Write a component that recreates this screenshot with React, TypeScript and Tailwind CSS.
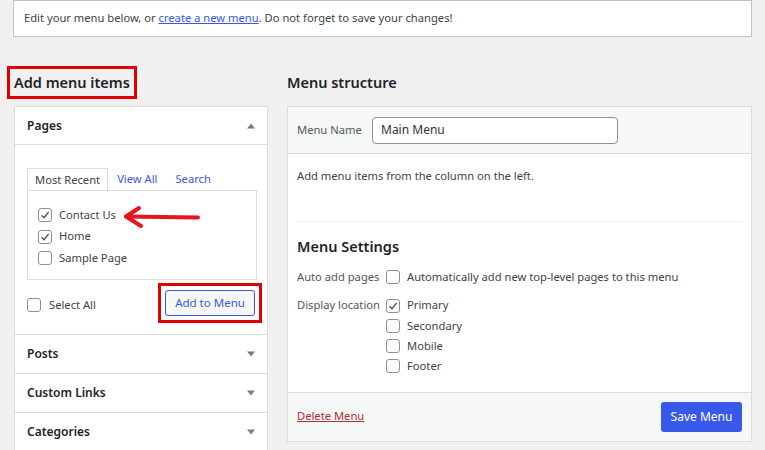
import React from "react";

const Check = ({ checked }: { checked?: boolean }) => (
  <span className="w-[14px] h-[14px] shrink-0 rounded-[3px] border border-[#8c8f94] bg-white flex items-center justify-center">
    {checked && (
      <svg width="10" height="10" viewBox="0 0 10 10">
        <path d="M1.5 5.2 L4 7.6 L8.6 2" fill="none" stroke="#50575e" strokeWidth="1.4" />
      </svg>
    )}
  </span>
);

const Caret = ({ up }: { up?: boolean }) => (
  <svg width="8" height="6" viewBox="0 0 8 6" className="shrink-0">
    {up ? <path d="M0 5.5 L4 0.5 L8 5.5 Z" fill="#787c82" /> : <path d="M0 0.5 L4 5.5 L8 0.5 Z" fill="#787c82" />}
  </svg>
);

const Accordion = ({ title }: { title: string }) => (
  <div className="h-[39px] border-t border-[#dcdcde] flex items-center justify-between pl-[12px] pr-[12px]">
    <span className="text-[12px] font-semibold text-[#1d2327]">{title}</span>
    <Caret />
  </div>
);

export default function App() {
  return (
    <div
      className="w-[765px] h-[450px] overflow-hidden bg-[#f0f0f1] text-[#3c434a] text-[11.2px]"
      style={{ fontFamily: '"Noto Sans", sans-serif' }}
    >
      {/* notice */}
      <div className="ml-[13px] w-[739px] h-[37px] bg-white border border-[#c3c4c7] flex items-center pl-[10px]">
        <span>
          Edit your menu below, or{" "}
          <a className="text-[#3858e9] underline">create a new menu</a>. Do not forget to save your changes!
        </span>
      </div>

      <div className="flex gap-[19px] ml-[14px] mt-[29px]">
        {/* left column */}
        <div className="w-[254px] shrink-0">
          <div className="-ml-[7px] w-[130px] h-[33px] border-[3px] border-[#e00000] pl-[4px] flex items-center">
            <h2 className="text-[14.5px] font-semibold text-[#1d2327] whitespace-nowrap">Add menu items</h2>
          </div>
          <div className="mt-[7px] bg-white border border-[#dcdcde]">
            <div className="h-[38px] flex items-center justify-between pl-[12px] pr-[12px] border-b border-[#dcdcde]">
              <span className="text-[12px] font-semibold text-[#1d2327]">Pages</span>
              <Caret up />
            </div>
            <div className="pl-[12px] pr-[10px] pt-[22px] pb-[11px]">
              <div className="flex items-center h-[23px]">
                <div className="h-[24px] px-[7px] flex items-center border border-b-0 border-[#dcdcde] bg-white relative top-[1px]">
                  Most Recent
                </div>
                <span className="ml-[9px] text-[#3858e9] relative top-[1px]">View All</span>
                <span className="ml-[18px] text-[#3858e9] relative top-[1px]">Search</span>
              </div>
              <div className="relative border border-[#dcdcde] h-[90px] pl-[10px] pt-[17px] flex flex-col gap-[7.5px]">
                <label className="flex items-center gap-[7px] h-[14px]">
                  <Check checked /> Contact Us
                </label>
                <label className="flex items-center gap-[7px] h-[14px]">
                  <Check checked /> Home
                </label>
                <label className="flex items-center gap-[7px] h-[14px]">
                  <Check /> Sample Page
                </label>
                <svg className="absolute left-[94px] top-[14px]" width="80" height="24" viewBox="0 0 80 24">
                  <path d="M4 11.5 L76 12.5" stroke="#e8141c" strokeWidth="4" strokeLinecap="round" />
                  <path d="M17 3 L4 11.5 L19 21" fill="none" stroke="#e8141c" strokeWidth="4" strokeLinecap="round" strokeLinejoin="round" />
                </svg>
              </div>
              <div className="mt-[3px] flex items-center justify-between h-[40px]">
                <label className="flex items-center gap-[8px] pt-[5px]">
                  <Check /> Select All
                </label>
                <div className="-mr-[5px] w-[104px] h-[40px] border-[3px] border-[#e00000] flex items-center justify-center">
                  <span className="w-[90px] h-[26px] rounded-[3px] border border-[#3858e9] text-[#3858e9] bg-[#f6f7f7] flex items-center justify-center text-[11.5px]">
                    Add to Menu
                  </span>
                </div>
              </div>
            </div>
            <Accordion title="Posts" />
            <Accordion title="Custom Links" />
            <Accordion title="Categories" />
          </div>
        </div>

        {/* right column */}
        <div className="w-[465px] shrink-0">
          <div className="h-[33px] flex items-center">
            <h2 className="text-[14.5px] font-semibold text-[#1d2327]">Menu structure</h2>
          </div>
          <div className="mt-[7px] bg-white border border-[#dcdcde]">
            <div className="h-[47px] bg-[#f6f7f7] border-b border-[#dcdcde] flex items-center pl-[9px]">
              <span className="text-[#50575e] w-[66px]">Menu Name</span>
              <div className="ml-[9px] w-[246px] h-[27px] bg-white border border-[#8c8f94] rounded-[4px] flex items-center pl-[8px] text-[12px] text-[#2c3338]">
                Main Menu
              </div>
            </div>
            <div className="px-[9px]">
              <div className="h-[68px] pt-[14px] border-b border-[#f0f0f1]">Add menu items from the column on the left.</div>
              <h3 className="mt-[14px] text-[14.5px] font-semibold text-[#1d2327]">Menu Settings</h3>
              <div className="mt-[11px] flex">
                <div className="w-[89px] text-[#50575e]">Auto add pages</div>
                <label className="flex items-center gap-[7px]">
                  <Check /> Automatically add new top-level pages to this menu
                </label>
              </div>
              <div className="mt-[11px] flex pb-[16px]">
                <div className="w-[89px] text-[#50575e]">Display location</div>
                <div className="flex flex-col gap-[1.5px]">
                  <label className="flex items-center gap-[7px] h-[18.7px]">
                    <Check checked /> Primary
                  </label>
                  <label className="flex items-center gap-[7px] h-[18.7px]">
                    <Check /> Secondary
                  </label>
                  <label className="flex items-center gap-[7px] h-[18.7px]">
                    <Check /> Mobile
                  </label>
                  <label className="flex items-center gap-[7px] h-[18.7px]">
                    <Check /> Footer
                  </label>
                </div>
              </div>
            </div>
            <div className="h-[49px] bg-[#f6f7f7] border-t border-[#dcdcde] flex items-center justify-between pl-[9px] pr-[9px]">
              <a className="text-[#b32d2e] underline">Delete Menu</a>
              <span className="w-[81px] h-[30px] rounded-[3px] bg-[#3858e9] text-white flex items-center justify-center text-[12px]">
                Save Menu
              </span>
            </div>
          </div>
        </div>
      </div>
    </div>
  );
}
